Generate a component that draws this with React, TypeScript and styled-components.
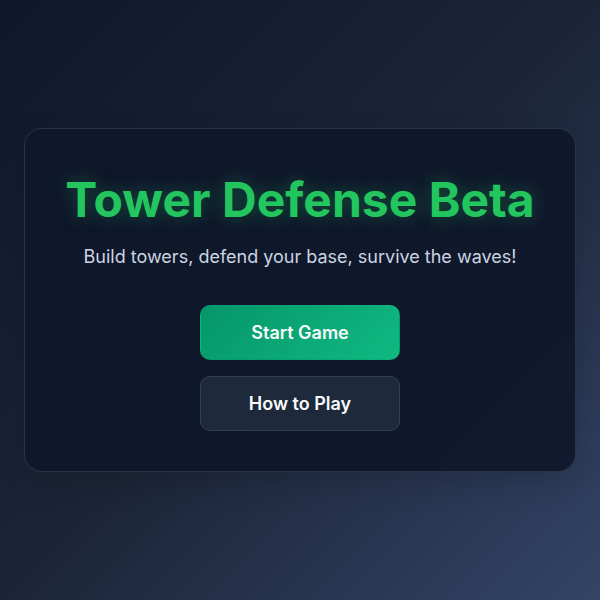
import React from "react";
import styled, { createGlobalStyle } from "styled-components";

const Global = createGlobalStyle`
  html, body { margin: 0; padding: 0; }
  body { font-family: Inter, "Noto Sans", sans-serif; }
  * { box-sizing: border-box; }
`;

const Page = styled.div`
  width: 600px;
  height: 600px;
  display: flex;
  align-items: center;
  justify-content: center;
  padding: 0 24px;
  background: linear-gradient(135deg, #0f172a 0%, #1c2538 50%, #334466 100%);
`;

const Card = styled.div`
  width: 100%;
  display: flex;
  flex-direction: column;
  align-items: center;
  padding: 42px 32px 40px;
  background: rgba(15, 23, 42, 0.94);
  border: 1px solid rgba(71, 85, 105, 0.45);
  border-radius: 18px;
  box-shadow: 0 10px 30px rgba(0, 0, 0, 0.15);
`;

const Title = styled.h1`
  margin: 0;
  font-size: 48px;
  font-weight: 700;
  line-height: 1.2;
  color: #22c55e;
  text-shadow: 0 0 18px rgba(34, 197, 94, 0.35);
  letter-spacing: 0;
`;

const Subtitle = styled.p`
  margin: 15px 0 35px;
  font-size: 18px;
  line-height: 1.5;
  color: #cbd5e1;
`;

const Buttons = styled.div`
  display: flex;
  flex-direction: column;
  gap: 16px;
`;

const Button = styled.button<{ $primary?: boolean }>`
  width: 200px;
  height: 55px;
  border-radius: 10px;
  font-family: Inter, sans-serif;
  font-size: 18px;
  font-weight: 600;
  color: #f8fafc;
  cursor: pointer;
  border: 1px solid ${(p) => (p.$primary ? "transparent" : "#334155")};
  background: ${(p) =>
    p.$primary ? "linear-gradient(135deg, #059669, #10b981)" : "#1e293b"};
`;

export default function App() {
  return (
    <>
      <Global />
      <Page>
        <Card>
          <Title>Tower Defense Beta</Title>
          <Subtitle>Build towers, defend your base, survive the waves!</Subtitle>
          <Buttons>
            <Button $primary>Start Game</Button>
            <Button>How to Play</Button>
          </Buttons>
        </Card>
      </Page>
    </>
  );
}
